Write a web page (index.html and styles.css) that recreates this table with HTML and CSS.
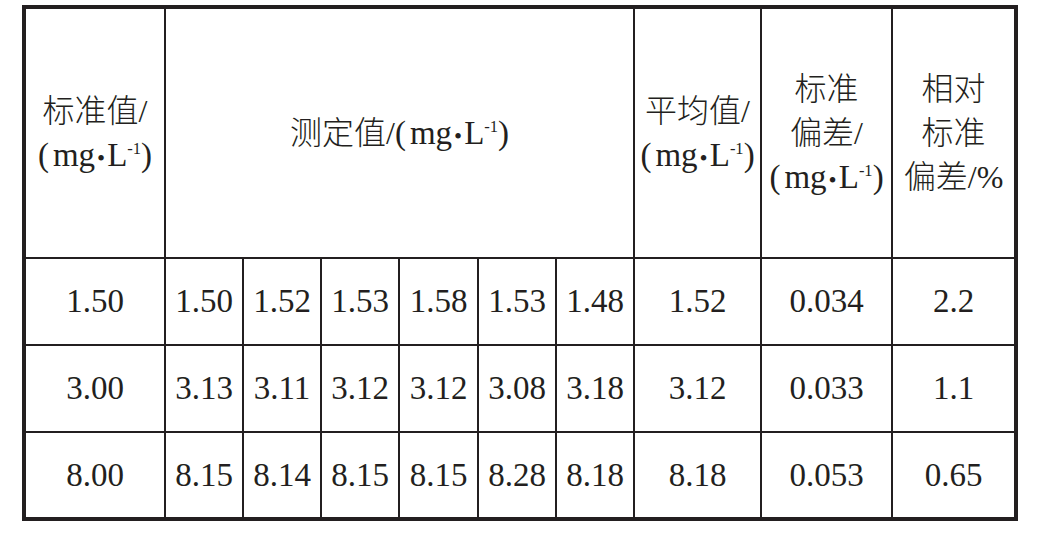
FILE: index.html
```html
<!DOCTYPE html>
<html lang="zh-CN">
<head>
    <meta charset="UTF-8">
    <title>测定结果</title>
    <link rel="stylesheet" href="styles.css">
</head>
<body>

    <!-- Results table -->
    <div class="frame">
        <table class="results">
            <colgroup>
                <col class="col-std">
                <col class="col-run">
                <col class="col-run">
                <col class="col-run">
                <col class="col-run wide">
                <col class="col-run">
                <col class="col-run">
                <col class="col-avg">
                <col class="col-sd">
                <col class="col-rsd">
            </colgroup>
            <thead>
                <tr>
                    <th><span class="cn">标准值</span>/<br><span class="unit"><span class="open">(</span>mg<span class="dot">•</span>L<sup>-1</sup>)</span></th>
                    <th colspan="6"><span class="cn">测定值</span>/<span class="unit"><span class="open">(</span>mg<span class="dot">•</span>L<sup>-1</sup>)</span></th>
                    <th><span class="cn">平均值</span>/<br><span class="unit"><span class="open">(</span>mg<span class="dot">•</span>L<sup>-1</sup>)</span></th>
                    <th><span class="cn">标准</span><br><span class="cn">偏差</span>/<br><span class="unit"><span class="open">(</span>mg<span class="dot">•</span>L<sup>-1</sup>)</span></th>
                    <th><span class="cn">相对</span><br><span class="cn">标准</span><br><span class="cn">偏差</span>/%</th>
                </tr>
            </thead>
            <tbody>
                <tr>
                    <td>1.50</td>
                    <td>1.50</td>
                    <td>1.52</td>
                    <td>1.53</td>
                    <td>1.58</td>
                    <td>1.53</td>
                    <td>1.48</td>
                    <td>1.52</td>
                    <td>0.034</td>
                    <td>2.2</td>
                </tr>
                <tr>
                    <td>3.00</td>
                    <td>3.13</td>
                    <td>3.11</td>
                    <td>3.12</td>
                    <td>3.12</td>
                    <td>3.08</td>
                    <td>3.18</td>
                    <td>3.12</td>
                    <td>0.033</td>
                    <td>1.1</td>
                </tr>
                <tr>
                    <td>8.00</td>
                    <td>8.15</td>
                    <td>8.14</td>
                    <td>8.15</td>
                    <td>8.15</td>
                    <td>8.28</td>
                    <td>8.18</td>
                    <td>8.18</td>
                    <td>0.053</td>
                    <td>0.65</td>
                </tr>
            </tbody>
        </table>
    </div>

</body>
</html>
```

FILE: styles.css
```css
/* Page */
body, html {
    margin: 0;
    background-color: #ffffff;
}

body {
    color: #231f20;
    font-family: "Liberation Serif", "Times New Roman", serif;
}

/* Chinese glyphs get their own family, numbers stay in the serif */
.cn {
    font-family: "Noto Sans CJK SC", sans-serif;
    font-weight: 300;
    line-height: 1;
}

/* Thick outer frame */
.frame {
    width: 988px;
    margin: 5px 0 0 22px;
    border: 4px solid #231f20;
}

/* Table */
.results {
    width: 988px;
    table-layout: fixed;
    border-collapse: separate;
    border-spacing: 0;
    font-family: "Liberation Serif", "Times New Roman", serif;
}

.col-std { width: 140px; }
.col-run { width: 78px; }
.col-run.wide { width: 79px; }
.col-avg { width: 127px; }
.col-sd { width: 131px; }
.col-rsd { width: 121px; }

.results th,
.results td {
    box-sizing: border-box;
    padding: 0;
    border-right: 2px solid #231f20;
    border-bottom: 2px solid #231f20;
    text-align: center;
    vertical-align: middle;
    white-space: nowrap;
}

.results th:last-child,
.results td:last-child {
    border-right: none;
}

.results tbody tr:last-child td {
    border-bottom: none;
}

/* Header cells */
.results th {
    height: 250px;
    font-size: 32px;
    font-weight: normal;
    line-height: 44px;
}

.unit {
    font-size: 33px;
    line-height: 1;
}

.open {
    margin-right: 4px;
}

.dot {
    font-size: 0.7em;
    margin: 0 2px;
}

sup {
    font-size: 0.5em;
    line-height: 0;
    vertical-align: 0.75em;
}

/* Number rows */
.results td {
    height: 87px;
    font-size: 33px;
}

.results tbody tr:last-child td {
    height: 84px;
}
```
